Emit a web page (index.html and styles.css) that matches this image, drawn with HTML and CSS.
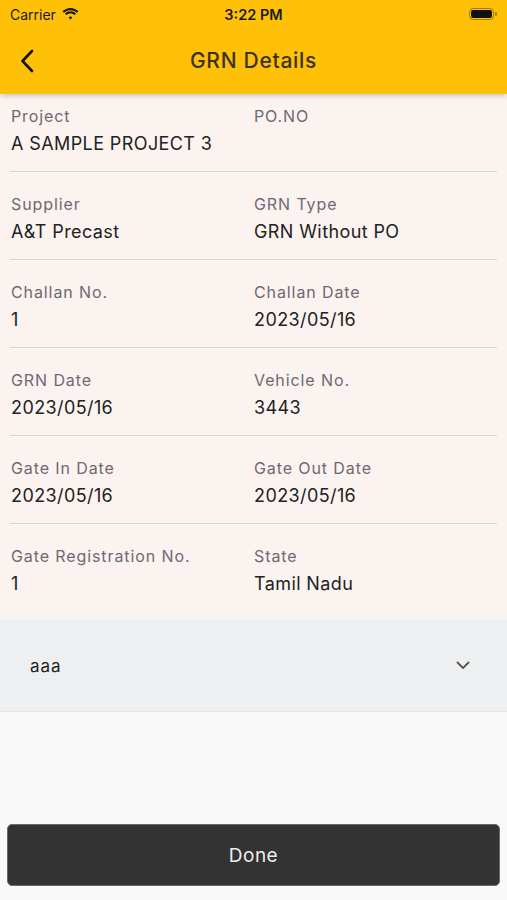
FILE: index.html
```html
<!DOCTYPE html>
<html lang="en">
<head>
    <meta charset="UTF-8">
    <meta name="viewport" content="width=device-width, initial-scale=1.0">
    <title>GRN Details</title>
    <link rel="stylesheet" href="styles.css">
</head>
<body>
    <div class="app">
        <div class="topbar">
            <div class="status-bar">
                <div class="carrier">
                    Carrier
                    <svg class="wifi" width="17" height="12" viewBox="0 0 17 12">
                        <path d="M8.5 2.2c2.5 0 4.8 1 6.5 2.6l1.5-1.5C14.4 1.3 11.6 0 8.5 0S2.6 1.3.5 3.3L2 4.8c1.7-1.6 4-2.6 6.5-2.6z" fill="#1a1a1a"/>
                        <path d="M8.5 5.4c1.6 0 3 .6 4.1 1.6l1.5-1.5C12.7 4.1 10.7 3.2 8.5 3.2S4.3 4.1 2.9 5.5L4.4 7c1.1-1 2.5-1.6 4.1-1.6z" fill="#1a1a1a"/>
                        <path d="M8.5 8.4c.8 0 1.4.3 1.9.8L8.5 11.8 6.6 9.2c.5-.5 1.1-.8 1.9-.8z" fill="#1a1a1a"/>
                    </svg>
                </div>
                <div class="time">3:22 PM</div>
                <div class="battery">
                    <span class="battery-body"><span class="battery-level"></span></span>
                    <span class="battery-tip"></span>
                </div>
            </div>
            <div class="nav">
                <svg class="back" width="14" height="24" viewBox="0 0 14 24">
                    <path d="M12 2 2.5 12l9.5 10" fill="none" stroke="#111" stroke-width="2.6" stroke-linecap="round" stroke-linejoin="round"/>
                </svg>
                <h1>GRN Details</h1>
            </div>
        </div>

        <div class="details">
            <div class="row">
                <div class="field">
                    <div class="label">Project</div>
                    <div class="value">A SAMPLE PROJECT 3</div>
                </div>
                <div class="field">
                    <div class="label">PO.NO</div>
                    <div class="value"></div>
                </div>
            </div>
            <div class="row">
                <div class="field">
                    <div class="label">Supplier</div>
                    <div class="value">A&amp;T Precast</div>
                </div>
                <div class="field">
                    <div class="label">GRN Type</div>
                    <div class="value">GRN Without PO</div>
                </div>
            </div>
            <div class="row">
                <div class="field">
                    <div class="label">Challan No.</div>
                    <div class="value">1</div>
                </div>
                <div class="field">
                    <div class="label">Challan Date</div>
                    <div class="value">2023/05/16</div>
                </div>
            </div>
            <div class="row">
                <div class="field">
                    <div class="label">GRN Date</div>
                    <div class="value">2023/05/16</div>
                </div>
                <div class="field">
                    <div class="label">Vehicle No.</div>
                    <div class="value">3443</div>
                </div>
            </div>
            <div class="row">
                <div class="field">
                    <div class="label">Gate In Date</div>
                    <div class="value">2023/05/16</div>
                </div>
                <div class="field">
                    <div class="label">Gate Out Date</div>
                    <div class="value">2023/05/16</div>
                </div>
            </div>
            <div class="row">
                <div class="field">
                    <div class="label">Gate Registration No.</div>
                    <div class="value">1</div>
                </div>
                <div class="field">
                    <div class="label">State</div>
                    <div class="value">Tamil Nadu</div>
                </div>
            </div>
        </div>

        <div class="dropdown">
            <span>aaa</span>
            <svg class="chevron" width="14" height="9" viewBox="0 0 14 9">
                <path d="M1.5 1.5 7 7l5.5-5.5" fill="none" stroke="#555" stroke-width="1.8" stroke-linecap="round" stroke-linejoin="round"/>
            </svg>
        </div>

        <div class="spacer"></div>

        <div class="footer">
            <button class="done-btn">Done</button>
        </div>
    </div>
</body>
</html>
```

FILE: styles.css
```css
* {
    box-sizing: border-box;
}
body {
    margin: 0;
    font-family: Inter, "Open Sans", sans-serif;
    background-color: #f9f9f9;
}
.app {
    display: flex;
    flex-direction: column;
    min-height: 900px;
}
.topbar {
    background-color: #ffc107;
    height: 94px;
    box-shadow: 0 2px 5px rgba(0,0,0,0.18);
    position: relative;
    z-index: 1;
}
.status-bar {
    display: flex;
    align-items: center;
    justify-content: space-between;
    height: 28px;
    padding: 0 10px;
}
.carrier {
    display: flex;
    align-items: center;
    gap: 6px;
    font-size: 14px;
    color: #1a1a1a;
    width: 120px;
}
.time {
    font-size: 14.5px;
    font-weight: 600;
    color: #1a1a1a;
}
.battery {
    width: 120px;
    display: flex;
    justify-content: flex-end;
    align-items: center;
}
.battery-body {
    width: 25px;
    height: 12px;
    border: 1px solid rgba(0,0,0,0.35);
    border-radius: 4px;
    padding: 1px;
    display: flex;
}
.battery-level {
    flex: 1;
    background: #111;
    border-radius: 2px;
}
.battery-tip {
    width: 2px;
    height: 4px;
    background: rgba(0,0,0,0.35);
    border-radius: 0 1px 1px 0;
    margin-left: 1px;
}
.nav {
    position: relative;
    height: 66px;
    display: flex;
    align-items: center;
    justify-content: center;
}
.back {
    position: absolute;
    left: 20px;
    top: 21px;
}
.nav h1 {
    margin: 0 0 2px;
    font-size: 21px;
    font-weight: 500;
    letter-spacing: 0.7px;
    color: #3b3320;
}
.details {
    background-color: #fbf3f0;
    padding: 0 10px;
}
.row {
    display: grid;
    grid-template-columns: 243px 1fr;
    padding: 22px 1px 15px;
    border-bottom: 1px solid #d9d5d3;
}
.row:first-child {
    padding-top: 12px;
}
.row:last-child {
    border-bottom: none;
    padding-bottom: 24px;
}
.label {
    font-size: 16px;
    line-height: 20px;
    letter-spacing: 0.9px;
    color: #6e6972;
}
.value {
    font-size: 18px;
    line-height: 24px;
    letter-spacing: 0.4px;
    margin-top: 6px;
    color: #222;
    min-height: 24px;
}
.dropdown {
    background-color: #eeeff1;
    height: 92px;
    display: flex;
    align-items: center;
    justify-content: space-between;
    padding: 0 37px 0 30px;
    font-size: 17px;
    letter-spacing: 1px;
    color: #222;
    border-bottom: 1px solid #e2e2e4;
}
.spacer {
    flex: 1;
}
.footer {
    padding: 0 7px 14px;
}
.done-btn {
    width: 100%;
    height: 62px;
    background-color: #333;
    color: #eee;
    border: 1px solid #6a6a6a;
    border-radius: 5px;
    font-family: inherit;
    font-size: 19px;
    letter-spacing: 0.5px;
}
```
